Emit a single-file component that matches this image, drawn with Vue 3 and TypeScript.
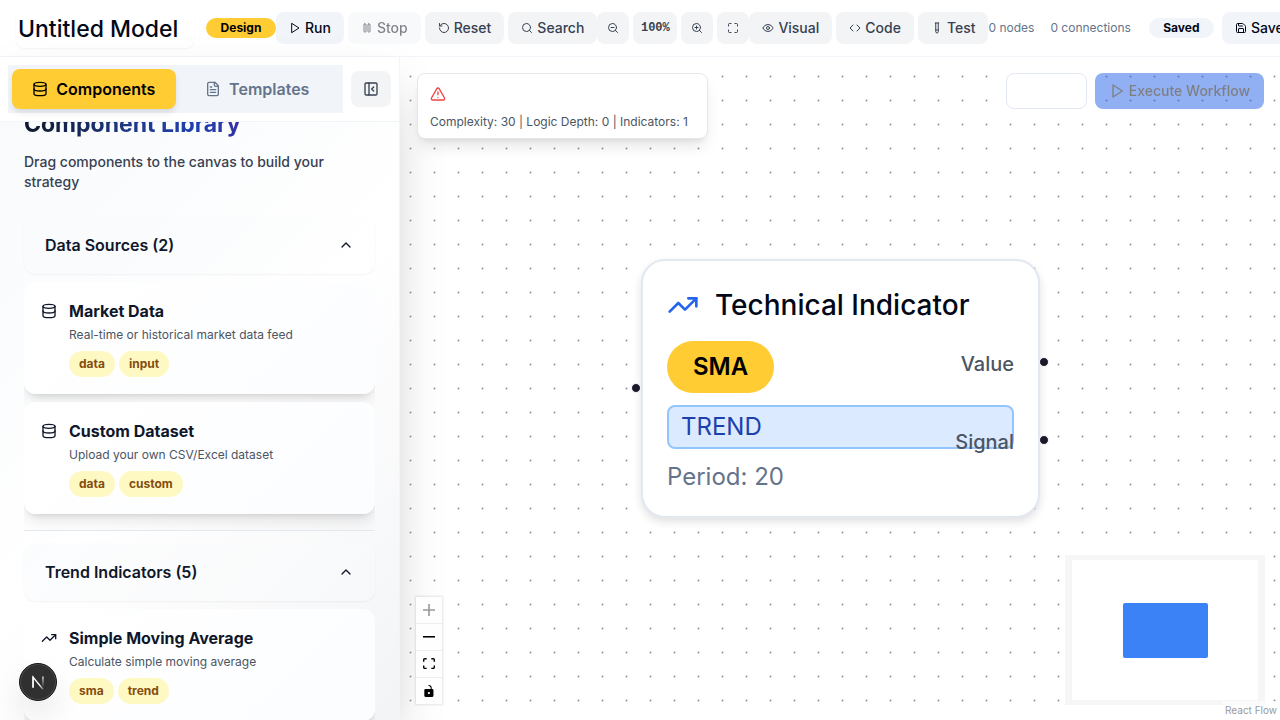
<script setup lang="ts">
import { onMounted, ref } from 'vue'

interface Item { icon: string; name: string; text: string; tags: string[] }
interface Section { title: string; items: Item[] }

const icons: Record<string, string> = {
  play: '<path d="M6 3 20 12 6 21Z"/>',
  pause: '<rect x="14" y="4" width="4" height="16" rx="1"/><rect x="6" y="4" width="4" height="16" rx="1"/>',
  reset: '<path d="M3 12a9 9 0 1 0 9-9 9.75 9.75 0 0 0-6.74 2.74L3 8"/><path d="M3 3v5h5"/>',
  search: '<circle cx="11" cy="11" r="8"/><path d="m21 21-4.3-4.3"/>',
  zoomOut: '<circle cx="11" cy="11" r="8"/><path d="m21 21-4.35-4.35M8 11h6"/>',
  zoomIn: '<circle cx="11" cy="11" r="8"/><path d="m21 21-4.35-4.35M11 8v6M8 11h6"/>',
  full: '<path d="M8 3H5a2 2 0 0 0-2 2v3M21 8V5a2 2 0 0 0-2-2h-3M3 16v3a2 2 0 0 0 2 2h3M16 21h3a2 2 0 0 0 2-2v-3"/>',
  eye: '<path d="M2.06 12.35a1 1 0 0 1 0-.7 10.75 10.75 0 0 1 19.88 0 1 1 0 0 1 0 .7 10.75 10.75 0 0 1-19.88 0"/><circle cx="12" cy="12" r="3"/>',
  code: '<path d="m16 18 6-6-6-6M8 6l-6 6 6 6"/>',
  test: '<path d="M14.5 2v17.5c0 1.4-1.1 2.5-2.5 2.5s-2.5-1.1-2.5-2.5V2M8.5 2h7M14.5 16h-5"/>',
  save: '<path d="M15.2 3a2 2 0 0 1 1.4.6l3.8 3.8a2 2 0 0 1 .6 1.4V19a2 2 0 0 1-2 2H5a2 2 0 0 1-2-2V5a2 2 0 0 1 2-2z"/><path d="M17 21v-7a1 1 0 0 0-1-1H8a1 1 0 0 0-1 1v7M7 3v4a1 1 0 0 0 1 1h7"/>',
  database: '<ellipse cx="12" cy="5" rx="9" ry="3"/><path d="M3 5v14a9 3 0 0 0 18 0V5"/><path d="M3 12a9 3 0 0 0 18 0"/>',
  file: '<path d="M15 2H6a2 2 0 0 0-2 2v16a2 2 0 0 0 2 2h12a2 2 0 0 0 2-2V7Z"/><path d="M14 2v4a2 2 0 0 0 2 2h4M10 9H8M16 13H8M16 17H8"/>',
  panel: '<rect x="3" y="3" width="18" height="18" rx="2"/><path d="M9 3v18M16 15l-3-3 3-3"/>',
  up: '<path d="m18 15-6-6-6 6"/>',
  trend: '<path d="M22 7 13.5 15.5 8.5 10.5 2 17"/><path d="M16 7h6v6"/>',
  alert: '<path d="m21.73 18-8-14a2 2 0 0 0-3.48 0l-8 14A2 2 0 0 0 4 21h16a2 2 0 0 0 1.73-3M12 9v4M12 17h.01"/>',
}

const sections: Section[] = [
  {
    title: 'Data Sources (2)',
    items: [
      { icon: 'database', name: 'Market Data', text: 'Real-time or historical market data feed', tags: ['data', 'input'] },
      { icon: 'database', name: 'Custom Dataset', text: 'Upload your own CSV/Excel dataset', tags: ['data', 'custom'] },
    ],
  },
  {
    title: 'Trend Indicators (5)',
    items: [
      { icon: 'trend', name: 'Simple Moving Average', text: 'Calculate simple moving average', tags: ['sma', 'trend'] },
    ],
  },
]

const modelName = ref('Untitled Model')
const library = ref<HTMLElement | null>(null)

onMounted(() => {
  if (library.value) library.value.scrollTop = 38
})
</script>

<template>
  <div class="app">
    <header class="toolbar">
      <input v-model="modelName" class="model-name" aria-label="Model name" />
      <span class="badge design">Design</span>
      <div class="group">
        <button class="btn primary"><svg class="i12" viewBox="0 0 24 24" v-html="icons.play" />Run</button>
        <button class="btn primary off" disabled><svg class="i12" viewBox="0 0 24 24" v-html="icons.pause" />Stop</button>
        <button class="btn"><svg class="i12" viewBox="0 0 24 24" v-html="icons.reset" />Reset</button>
        <button class="btn"><svg class="i12" viewBox="0 0 24 24" v-html="icons.search" />Search</button>
      </div>
      <div class="group">
        <button class="btn square" aria-label="Zoom out"><svg class="i12" viewBox="0 0 24 24" v-html="icons.zoomOut" /></button>
        <button class="btn percent">100%</button>
        <button class="btn square" aria-label="Zoom in"><svg class="i12" viewBox="0 0 24 24" v-html="icons.zoomIn" /></button>
        <button class="btn square" aria-label="Fit to screen"><svg class="i12" viewBox="0 0 24 24" v-html="icons.full" /></button>
      </div>
      <div class="group">
        <button class="btn"><svg class="i12" viewBox="0 0 24 24" v-html="icons.eye" />Visual</button>
        <button class="btn"><svg class="i12" viewBox="0 0 24 24" v-html="icons.code" />Code</button>
        <button class="btn"><svg class="i12" viewBox="0 0 24 24" v-html="icons.test" />Test</button>
      </div>
      <div class="stats"><span>0 nodes</span><span>0 connections</span></div>
      <span class="badge saved">Saved</span>
      <button class="btn primary save"><svg class="i12" viewBox="0 0 24 24" v-html="icons.save" />Save</button>
    </header>

    <div class="body">
      <aside class="sidebar">
        <div class="side-head">
          <div class="tabs" role="tablist">
            <button class="tab active" role="tab" aria-selected="true"><svg class="i16" viewBox="0 0 24 24" v-html="icons.database" />Components</button>
            <button class="tab" role="tab" aria-selected="false"><svg class="i16" viewBox="0 0 24 24" v-html="icons.file" />Templates</button>
          </div>
          <button class="collapse" aria-label="Collapse sidebar"><svg class="i16" viewBox="0 0 24 24" v-html="icons.panel" /></button>
        </div>
        <div ref="library" class="library">
          <h2>Component Library</h2>
          <p class="intro">Drag components to the canvas to build your strategy</p>
          <section v-for="s in sections" :key="s.title" class="section">
            <button class="section-head" aria-expanded="true">
              <span>{{ s.title }}</span><svg class="i16" viewBox="0 0 24 24" v-html="icons.up" />
            </button>
            <div class="cards">
              <article v-for="c in s.items" :key="c.name" class="card">
                <svg class="i16 card-icon" viewBox="0 0 24 24" v-html="icons[c.icon]" />
                <div>
                  <h3>{{ c.name }}</h3>
                  <p>{{ c.text }}</p>
                  <div class="tags"><span v-for="t in c.tags" :key="t">{{ t }}</span></div>
                </div>
              </article>
            </div>
          </section>
        </div>
      </aside>

      <main class="canvas">
        <svg class="grid" aria-hidden="true">
          <pattern id="dots" width="24" height="24" patternUnits="userSpaceOnUse"><circle cx="10.5" cy="19.5" r="1" fill="#91919a" /></pattern>
          <rect width="100%" height="100%" fill="url(#dots)" />
        </svg>
        <div class="complexity">
          <svg class="i16 warn" viewBox="0 0 24 24" v-html="icons.alert" />
          <p>Complexity: 30 | Logic Depth: 0 | Indicators: 1</p>
        </div>
        <div class="actions">
          <button class="blank" aria-label="Workflow status" />
          <button class="execute" disabled><svg class="i16" viewBox="0 0 24 24" v-html="icons.play" />Execute Workflow</button>
        </div>

        <div class="node">
          <div class="node-title"><svg viewBox="0 0 24 24" v-html="icons.trend" /><span>Technical Indicator</span></div>
          <span class="node-badge">SMA</span>
          <div class="node-kind">TREND</div>
          <div class="node-param">Period: 20</div>
          <span class="port value">Value</span>
          <span class="port signal">Signal</span>
          <i class="handle in" /><i class="handle out-a" /><i class="handle out-b" />
        </div>

        <div class="controls">
          <button disabled aria-label="zoom in"><svg viewBox="0 0 32 32"><path d="M18.133 13.867V0h-4.266v13.867H0v4.266h13.867V32h4.266V18.133H32v-4.266z" /></svg></button>
          <button aria-label="zoom out"><svg viewBox="0 0 32 5"><path d="M0 0h32v4.2H0z" /></svg></button>
          <button aria-label="fit view"><svg viewBox="0 0 32 30"><path d="M3.692 4.63c0-.53.4-.938.939-.938h5.215V0H4.708C2.13 0 0 2.054 0 4.63v5.216h3.692V4.631zM27.354 0h-5.2v3.692h5.17c.53 0 .984.4.984.939v5.215H32V4.631A4.624 4.624 0 0 0 27.354 0zm.954 24.83c0 .532-.4.94-.939.94h-5.215v3.768h5.215c2.577 0 4.631-2.13 4.631-4.707v-5.139h-3.692v5.139zm-23.677.94a.919.919 0 0 1-.939-.94v-5.138H0v5.139c0 2.577 2.13 4.707 4.708 4.707h5.138V25.77H4.631z" /></svg></button>
          <button aria-label="toggle interactivity"><svg viewBox="0 0 25 32"><path fill-rule="evenodd" d="M21.333 10.667H19.81V7.619C19.81 3.429 16.38 0 12.19 0c-4.114 1.828-1.37 2.133.305 2.438 1.676.305 4.42 2.59 4.42 5.181v3.048H3.047A3.056 3.056 0 0 0 0 13.714v15.238A3.056 3.056 0 0 0 3.048 32h18.285a3.056 3.056 0 0 0 3.048-3.048V13.714a3.056 3.056 0 0 0-3.048-3.047zM12.19 24.533a3.056 3.056 0 0 1-3.047-3.047 3.056 3.056 0 0 1 3.047-3.048 3.056 3.056 0 0 1 3.048 3.048 3.056 3.056 0 0 1-3.048 3.047z" /></svg></button>
        </div>
        <div class="minimap"><div class="map-node" /></div>
        <a class="credit" href="#">React Flow</a>
      </main>
    </div>

    <button class="dev-badge" aria-label="Developer tools">
      <svg viewBox="0 0 40 40" fill="none">
        <defs>
          <linearGradient id="diag" x1="18" y1="18" x2="28" y2="30" gradientUnits="userSpaceOnUse"><stop offset=".4" stop-color="#fff" /><stop offset="1" stop-color="#fff" stop-opacity="0" /></linearGradient>
          <linearGradient id="stem" x1="26" y1="13" x2="26" y2="26" gradientUnits="userSpaceOnUse"><stop stop-color="#fff" /><stop offset="1" stop-color="#fff" stop-opacity="0" /></linearGradient>
        </defs>
        <path d="M14.500 26V14.500L25.500 28" stroke="url(#diag)" stroke-width="1.500" />
        <path d="M14.500 26.500V14" stroke="#fff" stroke-width="1.500" />
        <path d="M25.500 14V26" stroke="url(#stem)" stroke-width="1.500" />
      </svg>
    </button>
  </div>
</template>

<style>
html, body { margin: 0; overflow: hidden; }
</style>

<style scoped>
* { box-sizing: border-box; }
.app { height: 100vh; display: flex; flex-direction: column; overflow: hidden; background: #fff; color: #020817; font-family: Inter, "Liberation Sans", sans-serif; font-size: 14px; line-height: 20px; }
button, input { font: inherit; color: inherit; border: 0; margin: 0; padding: 0; background: none; }
h2, h3, p { margin: 0; }
svg { flex: none; display: block; }
.i12, .i16 { fill: none; stroke: currentColor; stroke-width: 2; stroke-linecap: round; stroke-linejoin: round; }
.i12 { width: 12px; height: 12px; }
.i16 { width: 16px; height: 16px; }

.toolbar { flex: none; height: 57px; display: flex; align-items: center; padding-left: 16px; border-bottom: 1px solid #f1f5f9; white-space: nowrap; overflow: hidden; }
.toolbar > * { flex: none; }
.model-name { width: 178px; height: 40px; padding: 2px 2px 0; margin-right: 12px; border-radius: 8px; font-size: 23px; font-weight: 500; box-shadow: 0 1px 2px rgba(0, 0, 0, .05); }
.badge { height: 20px; border-radius: 10px; font-size: 12px; font-weight: 700; text-align: center; }
.design { width: 70px; background: #ffcc33; color: #000; }
.group { display: flex; gap: 4px; }
.btn { height: 32px; padding: 0 13px; display: flex; align-items: center; gap: 4px; border-radius: 8px; background: #f3f4f6; color: #374151; font-weight: 500; }
.primary { background: #f1f5f9; color: #020817; }
.off { opacity: .5; }
.square { width: 32px; padding: 0; justify-content: center; }
.percent { width: 44px; padding: 0; justify-content: center; font-family: "Liberation Mono", monospace; font-size: 12px; font-weight: 700; }
.stats { display: flex; gap: 16px; font-size: 12px; color: #64748b; }
.saved { width: 65px; margin: 0 8px 0 18px; background: #f1f5f9; }

.body { flex: 1; min-height: 0; display: flex; }
.sidebar { width: 400px; flex: none; display: flex; flex-direction: column; border-right: 1px solid #f1f5f9; background: #fff; box-shadow: 0 25px 50px -12px rgba(0, 0, 0, .25); }
.side-head { flex: none; display: flex; align-items: center; gap: 8px; padding: 8px; border-bottom: 1px solid #f1f5f9; }
.tabs { flex: 1; display: grid; grid-template-columns: 1fr 1fr; padding: 4px; background: #f1f5f9; }
.tab { height: 40px; display: flex; align-items: center; justify-content: center; gap: 8px; border-radius: 8px; font-size: 16px; font-weight: 600; color: #64748b; }
.tab.active { background: #ffcc33; color: #000; box-shadow: 0 4px 6px -1px rgba(0, 0, 0, .12); }
.collapse { width: 40px; height: 36px; display: grid; place-items: center; border-radius: 8px; background: #f3f4f6; color: #374151; }
.library { flex: 1; min-height: 0; overflow-y: auto; scrollbar-width: none; padding: 24px; background: linear-gradient(135deg, #f8fafc, #fff 50%, #f3f4f6); }
h2 { width: fit-content; margin-bottom: 12px; font-size: 23px; line-height: 32px; font-weight: 700; color: transparent; background: linear-gradient(90deg, #0f172a, #1e3a8a 50%, #1e40af 80%, #3730a3 100%); background-clip: text; }
.intro { margin-bottom: 24px; font-weight: 500; color: #374151; }
.section + .section { border-top: 1px solid #e2e8f0; padding-top: 12px; }
.section-head { width: 100%; display: flex; align-items: center; justify-content: space-between; padding: 17px 21px; border-radius: 12px; background: linear-gradient(135deg, rgba(248, 250, 252, .5), rgba(255, 255, 255, .1)); box-shadow: 0 1px 2px rgba(0, 0, 0, .05); color: #0f172a; font-size: 16px; line-height: 24px; font-weight: 600; }
.cards { display: flex; flex-direction: column; gap: 8px; padding: 8px 0 16px; overflow: hidden; }
.card { display: flex; gap: 12px; padding: 17px; border-radius: 12px; background: linear-gradient(135deg, #fff, #fcfdff); box-shadow: 0 10px 15px -3px rgba(0, 0, 0, .1), 0 4px 6px -4px rgba(0, 0, 0, .15); color: #0f172a; }
.card-icon { margin-top: 4px; }
h3 { font-size: 16px; line-height: 24px; font-weight: 700; }
.card p { margin-top: 4px; font-size: 12px; line-height: 16px; color: #4b5563; }
.tags { display: flex; gap: 4px; margin-top: 8px; }
.tags span { padding: 3px 10px; border-radius: 13px; background: #fef9c3; color: #854d0e; font-size: 12px; font-weight: 700; }

.canvas { flex: 1; min-width: 0; position: relative; }
.grid { position: absolute; inset: 0; width: 100%; height: 100%; }
.complexity { position: absolute; top: 16px; left: 17px; min-width: 291px; padding: 12px 12px 8px; border: 1px solid #e5e7eb; border-radius: 8px; background: #fff; box-shadow: 0 10px 15px -3px rgba(0, 0, 0, .1), 0 4px 6px -4px rgba(0, 0, 0, .1); }
.warn { margin-bottom: 12px; color: #ef4444; }
.complexity p { font-size: 12px; line-height: 16px; color: #4b5563; white-space: nowrap; }
.actions { position: absolute; top: 16px; right: 16px; display: flex; gap: 8px; }
.blank { width: 81px; height: 36px; border: 1px solid #e2e8f0; border-radius: 8px; background: #fff; }
.execute { height: 36px; padding: 0 14px; display: flex; align-items: center; gap: 4px; border-radius: 8px; background: #2563eb; color: #000; font-weight: 500; opacity: .5; white-space: nowrap; }

.node { position: absolute; left: 241px; top: 202px; width: 399px; height: 259px; padding: 24px; border: 2px solid #e2e8f0; border-radius: 24px; background: #fff; box-shadow: 0 4px 8px rgba(0, 0, 0, .12); font-size: 24px; line-height: 32px; }
.node-title { display: flex; align-items: center; gap: 16px; height: 40px; margin-bottom: 16px; font-size: 28px; font-weight: 500; white-space: nowrap; }
.node-title svg { width: 32px; height: 32px; fill: none; stroke: #2563eb; stroke-width: 2; stroke-linecap: round; stroke-linejoin: round; }
.node-badge { display: block; width: fit-content; padding: 10px 26px; border-radius: 26px; background: #ffcc33; color: #000; font-weight: 600; }
.node-kind { margin-top: 12px; padding: 4px 12px; border: 2px solid #93c5fd; border-radius: 8px; background: #dbeafe; color: #1e40af; }
.node-param { margin-top: 12px; color: #64748b; }
.port { position: absolute; right: 24px; font-size: 20px; line-height: 28px; font-weight: 500; color: #4b5563; }
.value { top: 89px; }
.signal { top: 167px; }
.handle { position: absolute; width: 10px; height: 10px; border: 1px solid #fff; border-radius: 50%; background: #1a192b; }
.in { left: -12px; top: 122px; }
.out-a { right: -11px; top: 96px; }
.out-b { right: -11px; top: 174px; }

.controls { position: absolute; left: 16px; bottom: 16px; width: 26px; box-shadow: 0 0 2px 1px rgba(0, 0, 0, .1); }
.controls button { width: 26px; height: 27px; display: grid; place-items: center; border-bottom: 1px solid #eee; background: #fefefe; }
.controls button:last-child { height: 26px; border: 0; }
.controls svg { width: 12px; max-height: 12px; }
.controls button:disabled svg { opacity: .4; }
.minimap { position: absolute; right: 15px; bottom: 15px; width: 200px; height: 150px; display: grid; place-items: center; border: solid #f6f6f6; border-width: 5px 7px; background: #fff; }
.map-node { width: 85px; height: 55px; border-radius: 2px; background: #3b82f6; }
.credit { position: absolute; right: 0; bottom: 0; padding: 2px 3px; background: rgba(255, 255, 255, .5); font-size: 10px; line-height: 15px; color: #999; text-decoration: none; }
.dev-badge { position: absolute; left: 19px; bottom: 19px; width: 38px; height: 38px; border-radius: 50%; border: 1px solid #171717; background: #303030; box-shadow: inset 0 0 0 1px #4a4a4a, 0 16px 32px -8px rgba(0, 0, 0, .24); }
.dev-badge svg { width: 36px; height: 36px; }
</style>
